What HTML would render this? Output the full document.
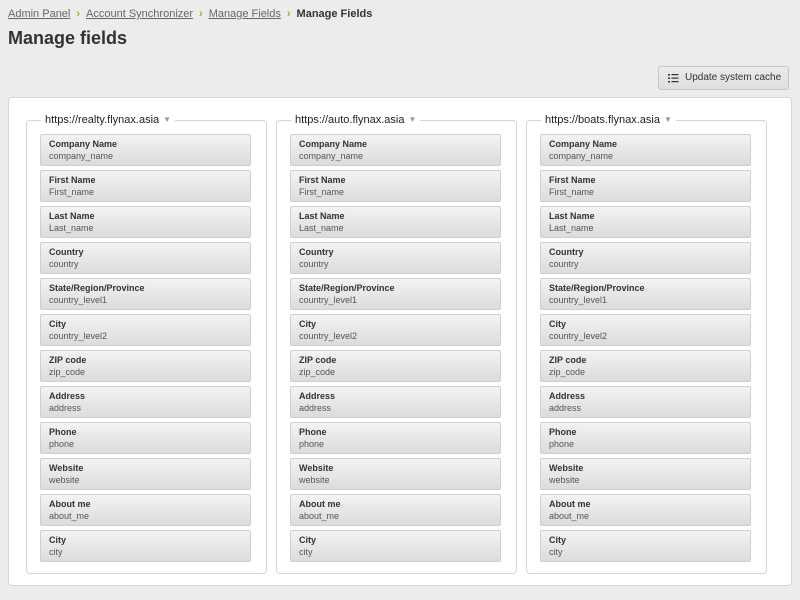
<!DOCTYPE html>
<html><head><meta charset="utf-8"><style>
body{margin:0;width:800px;height:600px;background:#ececec;font-family:"Liberation Sans",Arial,sans-serif;position:relative;overflow:hidden}
.bc{position:absolute;left:8px;top:8px;font-size:11px;color:#666;white-space:nowrap}
.bc a{color:#666;text-decoration:underline}
.bc .s{color:#8ab33f;margin:0 6px;font-weight:bold}
.bc b{color:#333}
h1{position:absolute;left:8px;top:28px;margin:0;font-size:18px;color:#333;font-weight:bold}
.btn{position:absolute;left:658px;top:66px;width:131px;height:24px;border:1px solid #c8c8c8;border-radius:3px;background:linear-gradient(#ececec,#dedede);font-size:10px;color:#333;line-height:22px;box-sizing:border-box;white-space:nowrap}
.btn span{position:absolute;left:26px;top:0}
.outer{position:absolute;left:8px;top:97px;width:784px;height:489px;box-sizing:border-box;background:#fff;border:1px solid #d6d6d6;border-radius:4px}
.fs{position:absolute;top:120px;width:241px;height:454px;box-sizing:border-box;border:1px solid #d4d4d4;border-radius:4px}
.lg{position:absolute;top:113px;background:#fff;padding:0 4px;font-size:11px;color:#222;height:14px;line-height:14px}
.lg i{font-style:normal;color:#999;font-size:8px;margin-left:4px;vertical-align:1px}
.it{position:absolute;width:211px;height:32px;box-sizing:border-box;border:1px solid #cfcfcf;border-radius:2px;background:linear-gradient(#f3f3f3,#dcdcdc);font-size:9px;padding:3px 0 0 8px;line-height:12px}
.it b{color:#333;display:block}
.it span{color:#555}
</style></head><body>
<div class="bc"><a>Admin Panel</a><span class="s">›</span><a>Account Synchronizer</a><span class="s">›</span><a>Manage Fields</a><span class="s">›</span><b>Manage Fields</b></div>
<h1>Manage fields</h1>
<div class="btn"><svg style="position:absolute;left:9px;top:7px" width="11" height="9"><g fill="#333"><rect x="0" y="0" width="2" height="1.5"/><rect x="0" y="3.5" width="2" height="1.5"/><rect x="0" y="7" width="2" height="1.5"/><rect x="3.5" y="0" width="7" height="1.2"/><rect x="3.5" y="3.5" width="7" height="1.2"/><rect x="3.5" y="7" width="7" height="1.2"/></g></svg><span>Update system cache</span></div>
<div class="outer"></div>
<div id="c"></div>
<script>
var f=[["Company Name","company_name"],["First Name","First_name"],["Last Name","Last_name"],["Country","country"],["State/Region/Province","country_level1"],["City","country_level2"],["ZIP code","zip_code"],["Address","address"],["Phone","phone"],["Website","website"],["About me","about_me"],["City","city"]];
var s=["https://realty.flynax.asia","https://auto.flynax.asia","https://boats.flynax.asia"];
var h="";
for(var c=0;c<3;c++){var x=26+c*250;
h+='<div class="fs" style="left:'+x+'px"></div><div class="lg" style="left:'+(x+15)+'px">'+s[c]+'<i>▼</i></div>';
for(var i=0;i<f.length;i++){h+='<div class="it" style="left:'+(x+14)+'px;top:'+(134+i*36)+'px"><b>'+f[i][0]+'</b><span>'+f[i][1]+'</span></div>';}}
document.getElementById("c").innerHTML=h;
</script>
</body></html>
